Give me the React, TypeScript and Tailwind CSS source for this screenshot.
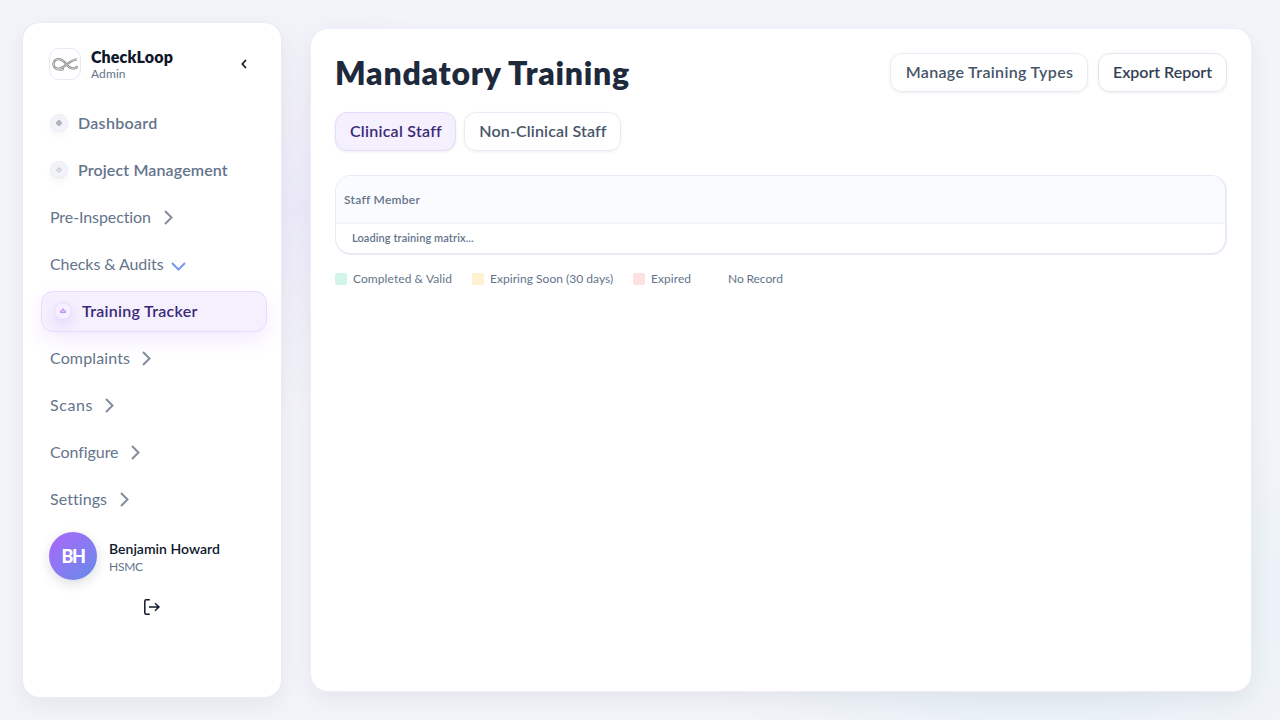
import type { ReactNode } from "react";

function Dot({ children, active = false }: { children: ReactNode; active?: boolean }) {
  return (
    <span
      className={
        active
          ? "flex size-[18px] shrink-0 items-center justify-center rounded-full border border-[#e6dbff] bg-[#f5f0ff] text-[#b77df5] shadow-[0_6px_12px_rgba(168,85,247,0.16)]"
          : "flex size-[18px] shrink-0 items-center justify-center rounded-full border border-[#ebedf4] bg-[#f2f3f8] text-[#b0b5c3] shadow-[0_4px_8px_rgba(15,23,42,0.04)]"
      }
    >
      {children}
    </span>
  );
}

function Chevron({ open = false }: { open?: boolean }) {
  return open ? (
    <svg className="mt-1 ml-2 h-[9px] w-[15px] text-[#7799ee]" viewBox="0 0 15 9" fill="none" stroke="currentColor" strokeWidth="2">
      <path d="M1 1l6.500 6.500L14 1" />
    </svg>
  ) : (
    <svg className="ml-[13px] h-[15px] w-[9px] text-[#858c9e]" viewBox="0 0 9 15" fill="none" stroke="currentColor" strokeWidth="2">
      <path d="M1 1l6.500 6.500L1 14" />
    </svg>
  );
}

function Group({ label, spacing, width, open = false }: { label: string; spacing: string; width: string; open?: boolean }) {
  return (
    <div className="flex h-[41px] items-center pl-[9px] text-base text-[#64748b]">
      <span className={`pb-0.5 whitespace-nowrap ${spacing} ${width}`}>{label}</span>
      <Chevron open={open} />
    </div>
  );
}

function Legend({ color, label, spacing, width }: { color: string; label: string; spacing: string; width: string }) {
  return (
    <div className="flex items-center gap-1.5">
      <span className={`size-3 rounded-[2px] ${color}`} />
      <span className={`whitespace-nowrap ${spacing} ${width}`}>{label}</span>
    </div>
  );
}

const LOOP = "M25 2.300C17 2.600 13 11.500 6.500 11.800C-.2 12-.2 2.200 6.500 2.200C13 2.200 14 9.800 19.500 11.200C22.500 12 24.800 10.700 25 8.800M3.500 11.300C6 13 9.500 12.600 12 12.200";

export default function App() {
  return (
    <div className="flex h-[720px] w-[1280px] items-start overflow-hidden bg-[#f3f4f9] bg-[radial-gradient(ellipse_320px_250px_at_300px_210px,rgba(167,139,250,0.09),transparent_85%),radial-gradient(ellipse_360px_220px_at_1040px_600px,rgba(125,211,220,0.16),transparent_100%)] pt-[22px] pl-[22px] font-['Lato',sans-serif]">
      <aside className="flex h-[676px] w-[260px] shrink-0 flex-col rounded-[18px] border border-[#e8ecf5] bg-white px-[18px] pt-[25px] shadow-[0_8px_24px_rgba(15,23,42,0.06)]">
        <header className="flex h-8 items-center pl-2">
          <div className="flex size-8 items-center justify-center rounded-[10px] border border-[#e6e8f4]">
            <svg className="h-[14px] w-[26px] shrink-0" viewBox="0 0 26 14" fill="none">
              <path d={LOOP} stroke="#858585" strokeWidth="2.300" />
              <path d={LOOP} stroke="#dededb" strokeWidth="0.900" />
            </svg>
          </div>
          <div className="ml-2.5 w-[150px] pb-px">
            <div className="text-base/5 font-extrabold tracking-[0.12px] text-[#0f172a]">CheckLoop</div>
            <div className="text-xs/[14px] tracking-[0.1px] text-[#64748b]">Admin</div>
          </div>
          <svg className="h-2.5 w-1.5 text-[#0f172a]" viewBox="0 0 6 10" fill="none" stroke="currentColor" strokeWidth="1.700">
            <path d="M5 1L1.300 5 5 9" />
          </svg>
        </header>

        <nav className="mt-[23px] flex flex-col gap-1.5">
          <div className="flex h-[41px] items-center gap-2.5 pb-0.5 pl-[9px] text-base font-semibold text-[#64748b]">
            <Dot>
              <svg className="size-1.5" viewBox="0 0 6 6" fill="currentColor"><path d="M2 0h2v.8h1.200V2H6v2h-.8v1.200H4V6H2v-.8H.8V4H0V2h.8V.8H2z" /></svg>
            </Dot>
            <span className="tracking-[0.3px]">Dashboard</span>
          </div>
          <div className="flex h-[41px] items-center gap-2.5 pb-0.5 pl-[9px] text-base font-semibold text-[#64748b]">
            <Dot>
              <svg className="size-1.5" viewBox="0 0 6 6" fill="none" stroke="currentColor" strokeWidth=".9"><path d="M.6 3L3.200.6 5.400 3 2.900 5.400zM2.200 3.200l1.500-1" /></svg>
            </Dot>
            <span className="whitespace-nowrap tracking-[0.13px]">Project Management</span>
          </div>
          <Group label="Pre-Inspection" width="w-[101px]" spacing="tracking-[-0.09px]" />
          <Group label="Checks & Audits" width="w-[113px]" spacing="tracking-[-0.09px]" open />
          <div className="flex h-[41px] w-[226px] items-center gap-2.5 rounded-xl border border-[#e6dcff] bg-[#f4f0fe] pb-0.5 pl-3 text-base font-semibold text-[#3b2a78] shadow-[0_8px_20px_rgba(168,85,247,0.12)]">
            <Dot active>
              <svg className="h-[5px] w-1.5" viewBox="0 0 6 5" fill="currentColor" fillOpacity=".45" stroke="currentColor" strokeWidth=".8"><path d="M.5 4.500V3L2 2.300 3 .5l1 1.800 1.500.7v1.500z" /></svg>
            </Dot>
            <span className="tracking-[0.29px]">Training Tracker</span>
          </div>
          <Group label="Complaints" width="w-[79px]" spacing="tracking-[0.13px]" />
          <Group label="Scans" width="w-[42px]" spacing="tracking-[0.6px]" />
          <Group label="Configure" width="w-[68px]" spacing="tracking-[-0.06px]" />
          <Group label="Settings" width="w-[57px]" spacing="tracking-[0.07px]" />
        </nav>

        <div className="mt-3 flex items-center gap-3 pl-2">
          <div className="flex size-12 items-center justify-center rounded-full bg-linear-to-br from-[#a964fc] to-[#608be8] text-lg font-black tracking-[-1.500px] text-white shadow-[0_4px_12px_rgba(15,23,42,0.14)]">BH</div>
          <div className="pt-[3px]">
            <div className="text-sm/[18px] font-semibold tracking-[0.02px] text-[#0f172a]">Benjamin Howard</div>
            <div className="text-xs/[18px] tracking-[-0.25px] text-[#64748b]">HSMC</div>
          </div>
        </div>
        <svg className="mt-[19px] ml-[103px] h-4 w-4 text-[#0f172a]" viewBox="0 0 16 16" fill="none" stroke="currentColor" strokeWidth="1.500">
          <path d="M5.800.8H2.300Q.8.8.8 2.300v11.400q0 1.500 1.500 1.500h3.500M5 8h10M11 4.200L15 8l-4 3.800" />
        </svg>
      </aside>

      <main className="mt-1.5 ml-7 h-[664px] w-[942px] shrink-0 rounded-[18px] border border-[#ebedfa] border-b-[#f2e9f9] bg-white px-6 pt-6 shadow-[0_8px_24px_rgba(15,23,42,0.06)]">
        <div className="flex h-[39px] items-center justify-between">
          <h1 className="text-[32px]/[39px] font-extrabold tracking-[0.750px] whitespace-nowrap text-[#1e293b]">Mandatory Training</h1>
          <div className="flex gap-2.5 text-base font-semibold whitespace-nowrap">
            <button className="h-[39px] w-[198px] rounded-xl border border-[#e9eaf5] pb-0.5 pl-px text-[#475569] shadow-[0_1px_3px_rgba(15,23,42,0.07)]"><span className="tracking-[0.34px]">Manage Training Types</span></button>
            <button className="h-[39px] w-[129px] rounded-xl border border-[#e6e6f2] pb-0.5 text-[#334155] shadow-[0_1px_3px_rgba(15,23,42,0.07)]"><span className="tracking-[-0.02px]">Export Report</span></button>
          </div>
        </div>
        <div className="mt-5 flex gap-2 text-base font-semibold whitespace-nowrap">
          <button className="h-[39px] w-[121px] rounded-xl border border-[#e4dcfd] bg-[#f4f0fe] pb-0.5 pl-px text-[#3b2a78] shadow-[0_1px_3px_rgba(15,23,42,0.07)]"><span className="tracking-[0.26px]">Clinical Staff</span></button>
          <button className="h-[39px] w-[157px] rounded-xl border border-[#e9eaf5] pb-0.5 pl-px text-[#475569] shadow-[0_1px_3px_rgba(15,23,42,0.07)]"><span className="tracking-[0.15px]">Non-Clinical Staff</span></button>
        </div>
        <div className="mt-6 h-20 overflow-hidden rounded-2xl border border-r-2 border-b-2 border-[#e8eaf5]">
          <div className="flex h-12 items-center border-b-2 border-[#f2f3fb] bg-[#fafbff] pt-0.5 pl-2 text-xs font-semibold text-[#64748b]"><span className="tracking-[0.28px]">Staff Member</span></div>
          <div className="flex h-[29px] items-center pl-4 text-[11px] font-semibold text-[#64748b]"><span className="tracking-[0.09px]">Loading training matrix...</span></div>
        </div>
        <div className="mt-4 flex gap-5 text-xs text-[#64748b]">
          <Legend color="bg-[#d1f5e7]" label="Completed & Valid" width="w-[99px]" spacing="tracking-[0.08px]" />
          <Legend color="bg-[#fff1cf]" label="Expiring Soon (30 days)" width="w-[123px]" spacing="tracking-[0.03px]" />
          <Legend color="bg-[#ffe0e1]" label="Expired" width="w-[39px]" spacing="tracking-[0.05px]" />
          <Legend color="bg-white" label="No Record" width="w-[55px]" spacing="tracking-[-0.09px]" />
        </div>
      </main>
    </div>
  );
}
